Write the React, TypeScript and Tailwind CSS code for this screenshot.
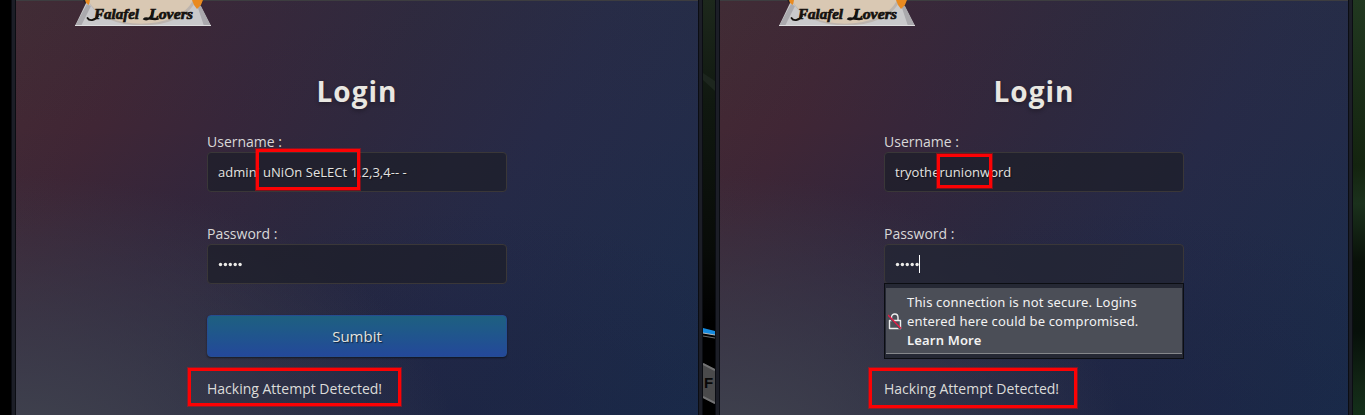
import React from "react";

function Mark({ className }: { className: string }) {
  return <div className={`pointer-events-none absolute z-20 border-[3px] border-[#fc0204] shadow-[0_0_0_1px_rgba(252,0,4,.4)] ${className}`} />;
}

function Logo({ className }: { className: string }) {
  return (
    <svg className={`absolute -top-px ${className}`} width="137" height="28" viewBox="0 0 137 28">
      <path d="M8 0H128L126 6L121 9L11 5Z" fill="#1c1a20" opacity=".7" />
      <path d="M11 3L0 26H136L125 5L121 0H12Z" fill="#c9c9cb" />
      <path d="M12 4L0 26H6L16 6ZM122 5L126 6L136 26H129Z" fill="#aaa9ad" />
      <path d="M13 0C26 34 108 34 121 0Z" fill="#bcb4ae" />
      <path d="M13 0C28 31.500 104 31.500 118 0Z" fill="#d9c8b3" />
      <path d="M10 0H15L14 5L11 3ZM117 0H128L126 5L122 9L119 5Z" fill="#e98a20" />
      <path d="M0 25.500H136" stroke="#dededf" />
      <g fill="#15120f" stroke="#15120f" strokeWidth=".7" fontFamily="'Liberation Serif', serif" fontStyle="italic" fontWeight="700">
        <text x="19" y="18.500" fontSize="15" textLength="45" lengthAdjust="spacingAndGlyphs">Falafel</text>
        <text x="74" y="18.500" fontSize="15" textLength="44" lengthAdjust="spacingAndGlyphs">Lovers</text>
      </g>
      <path d="M23 16C20 21 14 21 12.500 18M78 11C77 17 73 21 69 19C71 16 77 21 83 19" fill="none" stroke="#15120f" strokeWidth="1.800" strokeLinecap="round" />
    </svg>
  );
}

function Frame() {
  return <div className="h-full w-[5px] shrink-0 border-x border-[#0b0d13] bg-[#1c1e27]" />;
}

function Field({ label, value, caret, password }: { label: string; value: string; caret?: boolean; password?: boolean }) {
  return (
    <div className="h-[92px]">
      <div className="h-[20px] text-[14px] leading-[20px] text-[#d9d8d8]">{label}</div>
      <div className={`flex h-[40px] items-center rounded-[4px] border border-[#3a3738] px-[10px] text-[13px] tracking-[0.04px] text-[#e4e3e0] [text-shadow:1px_1px_1px_rgba(0,0,0,.5)] ${caret ? "bg-[#232633]/80" : "bg-[#1d1f29]/75"}`}>
        {password ? (
          <svg width="24" height="6" viewBox="0 0 24 6" fill="#ecebe8">
            <circle cx="2.5" cy="3.500" r="1.700" /><circle cx="7.4" cy="3.500" r="1.700" /><circle cx="12.3" cy="3.500" r="1.700" /><circle cx="17.2" cy="3.500" r="1.700" /><circle cx="22.1" cy="3.500" r="1.700" />
          </svg>
        ) : (
          <span className="pt-px whitespace-pre">{value}</span>
        )}
        {caret && <span className="h-[18px] w-px bg-white" />}
      </div>
    </div>
  );
}

function Warning() {
  return (
    <div className="-mt-[1px] h-[76px] border border-[#0c0e13] bg-[#252834] px-px pt-[4px]">
      <div className="flex h-[66px] items-center border-b border-[#85878b] bg-[#4b4e57]">
        <svg className="ml-[2px] shrink-0" width="14" height="18" viewBox="0 0 14 18" fill="none">
          <path d="M3.500 8V5.500C3.500 .8 10 .8 10 5.500V8M1.500 8.500H12.500V16.500H1.500Z" stroke="#eee" strokeWidth="1.4" strokeLinejoin="round" />
          <path d="M0 4L12 17" stroke="#4b4e57" strokeWidth="1.800" />
          <path d="M0 3L13 16.500" stroke="#e51b46" strokeWidth="1.4" />
        </svg>
        <div className="ml-[5px] pt-px whitespace-nowrap font-['Noto_Sans',sans-serif] text-[13px] leading-[19px] tracking-[0.17px] text-[#f2f2f2]">
          This connection is not secure. Logins<br />entered here could be compromised.<br /><b className="font-semibold">Learn More</b>
        </div>
      </div>
    </div>
  );
}

function Login({ user, warn }: { user: string; warn?: boolean }) {
  return (
    <div className="flex w-[300px] flex-col pt-[71px]">
      <h1 className="h-[60px] text-center text-[28px] font-bold leading-[38px] tracking-[1px] text-[#e9e7e1] [text-shadow:0_2px_4px_rgba(0,0,0,.3)]">Login</h1>
      <Field label="Username :" value={user} />
      <div className="h-[91px]">
        <Field label="Password :" value="" password caret={warn} />
      </div>
      {warn ? (
        <div className="-mt-[31px] h-[103px]"><Warning /></div>
      ) : (
        <div className="h-[72px]">
          <button className="h-[42px] w-full rounded-[4px] border border-[#254d91] bg-linear-to-b from-[#1e6080] to-[#24489a] text-[15px] text-[#e3e3df] shadow-[0_1px_2px_rgba(0,0,0,.5)] [text-shadow:1px_1px_1px_rgba(0,0,0,.6)]">Sumbit</button>
        </div>
      )}
      <div className="-mt-[8px] text-[14px] leading-[20px] text-[#dcdcda]">Hacking Attempt Detected!</div>
    </div>
  );
}

const backdrop =
  "bg-[radial-gradient(ellipse_65%_70%_at_0%_112%,#41454f_0%,#3f414ecc_30%,#3f414e00_100%),radial-gradient(ellipse_50%_50%_at_65%_100%,#1c204066,#1c204000),linear-gradient(to_bottom,#2c384422_0%,#2c384400_30%,#0b254744_100%),linear-gradient(118deg,#442a33_0%,#402635_16%,#37263a_30%,#2e283e_46%,#272a47_66%,#1e2d4b_100%)]";

export default function App() {
  return (
    <main className="relative flex h-[415px] w-[1365px] overflow-hidden bg-black font-['Open_Sans',sans-serif]">
      <div className="w-[11px] shrink-0 bg-black" />
      <Frame />
      <section className={`relative flex w-[682px] shrink-0 border-t border-[#3d3d40] pl-[191px] ${backdrop}`}>
        <Logo className="left-[59px]" />
        <Login user="admin' uNiOn SeLECt 1,2,3,4-- -" />
      </section>
      <Frame />
      <svg className="shrink-0" width="12" height="415" viewBox="0 0 12 415">
        <defs><linearGradient id="gap" x2="0" y2="1"><stop stopColor="#1d281c" /><stop offset=".25" stopColor="#101810" /><stop offset=".6" stopColor="#080b08" /><stop offset=".78" stopColor="#000" /></linearGradient></defs>
        <path d="M0 0H12V415H0Z" fill="url(#gap)" />
        <path d="M0 73L12 81V91L0 80Z" fill="#1d261e" />
        <path d="M0 328L12 331V335L0 333Z" fill="#168be0" />
        <path d="M0 333L12 335" stroke="#b5b8bb" />
        <path d="M0 336L12 338" stroke="#66686a" />
        <path d="M0 363L12 369V404L0 398Z" fill="#4a4a4b" />
        <path d="M0 364L12 370M0 397L12 403" stroke="#737374" strokeWidth="2" />
        <text x="1" y="388" fontSize="15" fontWeight="700" fontFamily="Liberation Sans, sans-serif" fill="#080808">F</text>
      </svg>
      <Frame />
      <section className={`relative flex w-[628px] shrink-0 border-t border-[#3d3d40] pl-[164px] ${backdrop}`}>
        <Logo className="left-[59px]" />
        <Login user="tryotherunionword" warn />
      </section>
      <Frame />
      <div className="w-[12px] shrink-0 bg-[linear-gradient(to_bottom,#213820,#14240f_40%,#1b311c_49%,#091109_63%,#07100a_80%,#122615_93%,#14301a)]" />
      <Mark className="left-[256px] top-[149px] h-[41px] w-[104px]" />
      <Mark className="left-[188px] top-[368px] h-[38px] w-[213px]" />
      <Mark className="left-[937px] top-[154px] h-[34px] w-[55px]" />
      <Mark className="left-[869px] top-[368px] h-[40px] w-[208px]" />
    </main>
  );
}
